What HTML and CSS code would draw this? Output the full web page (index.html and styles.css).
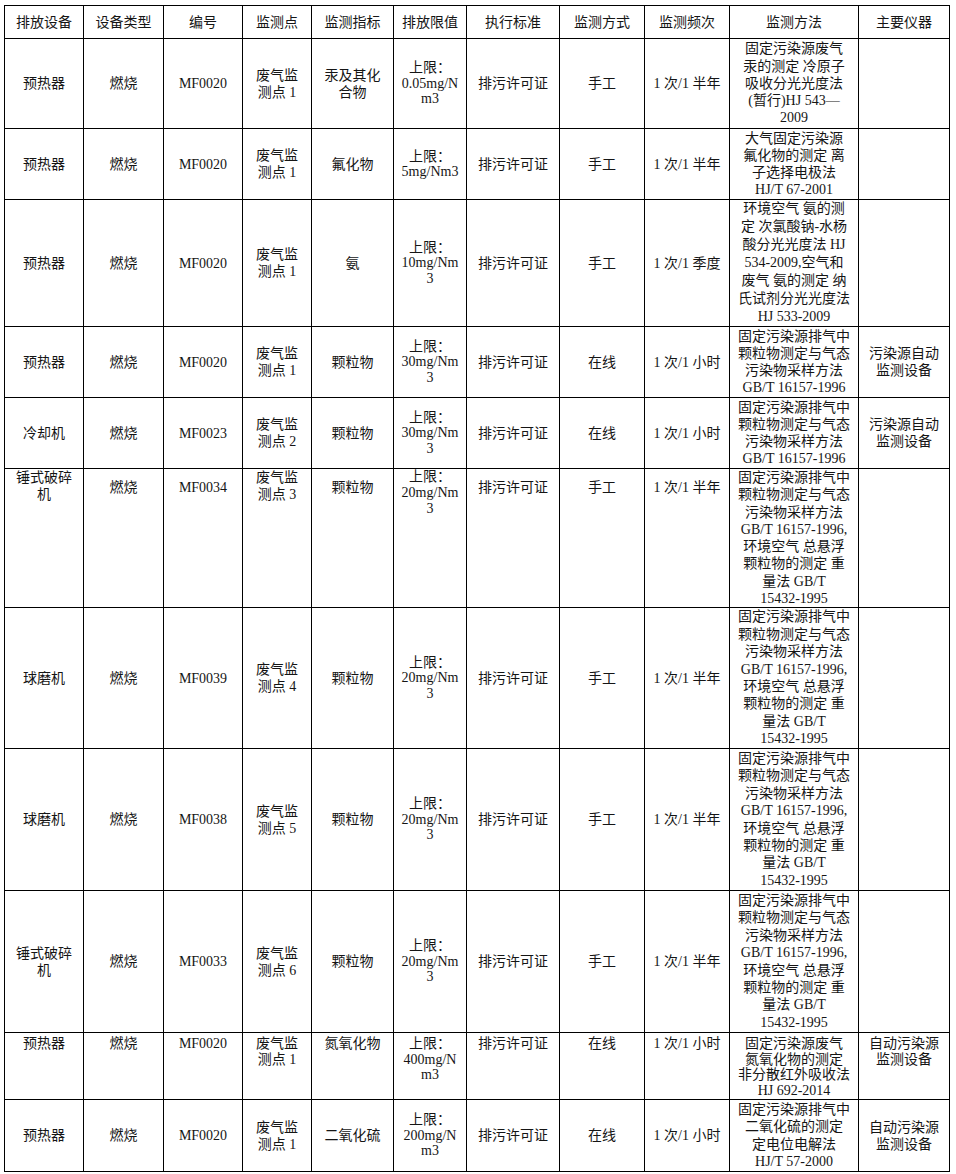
FILE: index.html
```html
<!DOCTYPE html>
<html lang="zh">
<head>
<meta charset="utf-8">
<title>监测方案</title>
<link rel="stylesheet" href="styles.css">
</head>
<body>
<table class="sheet">
  <colgroup>
    <col class="c79"><col class="c80"><col class="c79"><col class="c69"><col class="c82"><col class="c73"><col class="c93"><col class="c85"><col class="c85"><col class="c129"><col class="c91">
  </colgroup>
  <thead>
    <tr class="r-head">
      <th>排放设备</th><th>设备类型</th><th>编号</th><th>监测点</th><th>监测指标</th><th>排放限值</th><th>执行标准</th><th>监测方式</th><th>监测频次</th><th>监测方法</th><th>主要仪器</th>
    </tr>
  </thead>
  <tbody>
    <tr class="r90">
      <td>预热器</td><td>燃烧</td><td>MF0020</td><td>废气监<br>测点 1</td><td>汞及其化<br>合物</td>
      <td class="limit">上限：<br>0.05mg/N<br>m3</td><td>排污许可证</td><td>手工</td><td>1 次/1 半年</td>
      <td class="method">固定污染源废气<br>汞的测定 冷原子<br>吸收分光光度法<br>(暂行)HJ 543—<br>2009</td><td></td>
    </tr>
    <tr class="r71">
      <td>预热器</td><td>燃烧</td><td>MF0020</td><td>废气监<br>测点 1</td><td>氟化物</td>
      <td class="limit">上限：<br>5mg/Nm3</td><td>排污许可证</td><td>手工</td><td>1 次/1 半年</td>
      <td class="method">大气固定污染源<br>氟化物的测定 离<br>子选择电极法<br>HJ/T 67-2001</td><td></td>
    </tr>
    <tr class="r126">
      <td>预热器</td><td>燃烧</td><td>MF0020</td><td>废气监<br>测点 1</td><td>氨</td>
      <td class="limit">上限：<br>10mg/Nm<br>3</td><td>排污许可证</td><td>手工</td><td>1 次/1 季度</td>
      <td class="method">环境空气 氨的测<br>定 次氯酸钠-水杨<br>酸分光光度法 HJ<br>534-2009,空气和<br>废气 氨的测定 纳<br>氏试剂分光光度法<br>HJ 533-2009</td><td></td>
    </tr>
    <tr class="r71">
      <td>预热器</td><td>燃烧</td><td>MF0020</td><td>废气监<br>测点 1</td><td>颗粒物</td>
      <td class="limit">上限：<br>30mg/Nm<br>3</td><td>排污许可证</td><td>在线</td><td>1 次/1 小时</td>
      <td class="method">固定污染源排气中<br>颗粒物测定与气态<br>污染物采样方法<br>GB/T 16157-1996</td><td>污染源自动<br>监测设备</td>
    </tr>
    <tr class="r71">
      <td>冷却机</td><td>燃烧</td><td>MF0023</td><td>废气监<br>测点 2</td><td>颗粒物</td>
      <td class="limit">上限：<br>30mg/Nm<br>3</td><td>排污许可证</td><td>在线</td><td>1 次/1 小时</td>
      <td class="method">固定污染源排气中<br>颗粒物测定与气态<br>污染物采样方法<br>GB/T 16157-1996</td><td>污染源自动<br>监测设备</td>
    </tr>
    <tr class="r138 top">
      <td>锤式破碎<br>机</td><td class="one">燃烧</td><td class="one">MF0034</td><td>废气监<br>测点 3</td><td class="one">颗粒物</td>
      <td class="limit">上限：<br>20mg/Nm<br>3</td><td class="one">排污许可证</td><td class="one">手工</td><td class="one">1 次/1 半年</td>
      <td class="method">固定污染源排气中<br>颗粒物测定与气态<br>污染物采样方法<br>GB/T 16157-1996,<br>环境空气 总悬浮<br>颗粒物的测定 重<br>量法 GB/T<br>15432-1995</td><td></td>
    </tr>
    <tr class="r142 r7">
      <td>球磨机</td><td>燃烧</td><td>MF0039</td><td>废气监<br>测点 4</td><td>颗粒物</td>
      <td class="limit">上限：<br>20mg/Nm<br>3</td><td>排污许可证</td><td>手工</td><td>1 次/1 半年</td>
      <td class="method">固定污染源排气中<br>颗粒物测定与气态<br>污染物采样方法<br>GB/T 16157-1996,<br>环境空气 总悬浮<br>颗粒物的测定 重<br>量法 GB/T<br>15432-1995</td><td></td>
    </tr>
    <tr class="r142">
      <td>球磨机</td><td>燃烧</td><td>MF0038</td><td>废气监<br>测点 5</td><td>颗粒物</td>
      <td class="limit">上限：<br>20mg/Nm<br>3</td><td>排污许可证</td><td>手工</td><td>1 次/1 半年</td>
      <td class="method">固定污染源排气中<br>颗粒物测定与气态<br>污染物采样方法<br>GB/T 16157-1996,<br>环境空气 总悬浮<br>颗粒物的测定 重<br>量法 GB/T<br>15432-1995</td><td></td>
    </tr>
    <tr class="r141">
      <td>锤式破碎<br>机</td><td>燃烧</td><td>MF0033</td><td>废气监<br>测点 6</td><td>颗粒物</td>
      <td class="limit">上限：<br>20mg/Nm<br>3</td><td>排污许可证</td><td>手工</td><td>1 次/1 半年</td>
      <td class="method">固定污染源排气中<br>颗粒物测定与气态<br>污染物采样方法<br>GB/T 16157-1996,<br>环境空气 总悬浮<br>颗粒物的测定 重<br>量法 GB/T<br>15432-1995</td><td></td>
    </tr>
    <tr class="r68 top-tight">
      <td>预热器</td><td>燃烧</td><td>MF0020</td><td>废气监<br>测点 1</td><td>氮氧化物</td>
      <td class="limit">上限：<br>400mg/N<br>m3</td><td>排污许可证</td><td>在线</td><td>1 次/1 小时</td>
      <td class="method">固定污染源废气<br>氮氧化物的测定<br>非分散红外吸收法<br>HJ 692-2014</td><td>自动污染源<br>监测设备</td>
    </tr>
    <tr class="r72">
      <td>预热器</td><td>燃烧</td><td>MF0020</td><td>废气监<br>测点 1</td><td>二氧化硫</td>
      <td class="limit">上限：<br>200mg/N<br>m3</td><td>排污许可证</td><td>在线</td><td>1 次/1 小时</td>
      <td class="method">固定污染源排气中<br>二氧化硫的测定<br>定电位电解法<br>HJ/T 57-2000</td><td>自动污染源<br>监测设备</td>
    </tr>
  </tbody>
</table>
</body>
</html>
```
FILE: styles.css
```css
html, body {
  margin: 0;
  padding: 0;
  background: #ffffff;
}

.sheet {
  border-collapse: collapse;
  table-layout: fixed;
  width: 946px;
  margin: 5px 0 0 4px;
  font-family: "Liberation Serif", "Noto Sans CJK SC", serif;
  font-size: 14px;
  color: #151515;
}

.c79 { width: 79px; }
.c80 { width: 80px; }
.c69 { width: 69px; }
.c82 { width: 82px; }
.c73 { width: 73px; }
.c93 { width: 93px; }
.c85 { width: 85px; }
.c129 { width: 129px; }
.c91 { width: 91px; }

.sheet th,
.sheet td {
  border: 1px solid #000;
  padding: 0 2px;
  text-align: center;
  vertical-align: middle;
  line-height: 17px;
  white-space: nowrap;
  font-weight: normal;
  overflow: hidden;
}

.sheet td.limit {
  line-height: 15.5px;
}

.sheet td.method {
  line-height: 17.25px;
}

.r-head { height: 33px; }
.r90 { height: 90px; }
.r71 { height: 71px; }
.r126 { height: 126px; }
.r138 { height: 138px; }
.r142 { height: 142px; }
.r7 { height: 141px; }
.r141 { height: 142px; }
.r68 { height: 67px; }
.r72 { height: 72px; }

.r126 td.method { line-height: 18px; }
.r142 td.method,
.r141 td.method { line-height: 17.4px; }

.top td {
  vertical-align: top;
  padding-top: 0;
}
.top td.limit { line-height: 16px; }
.top td.one { padding-top: 10px; }

.top-tight td {
  vertical-align: top;
  padding-top: 3px;
  line-height: 15.5px;
}
.top-tight td.limit,
.top-tight td.method { line-height: 15.5px; }
```
